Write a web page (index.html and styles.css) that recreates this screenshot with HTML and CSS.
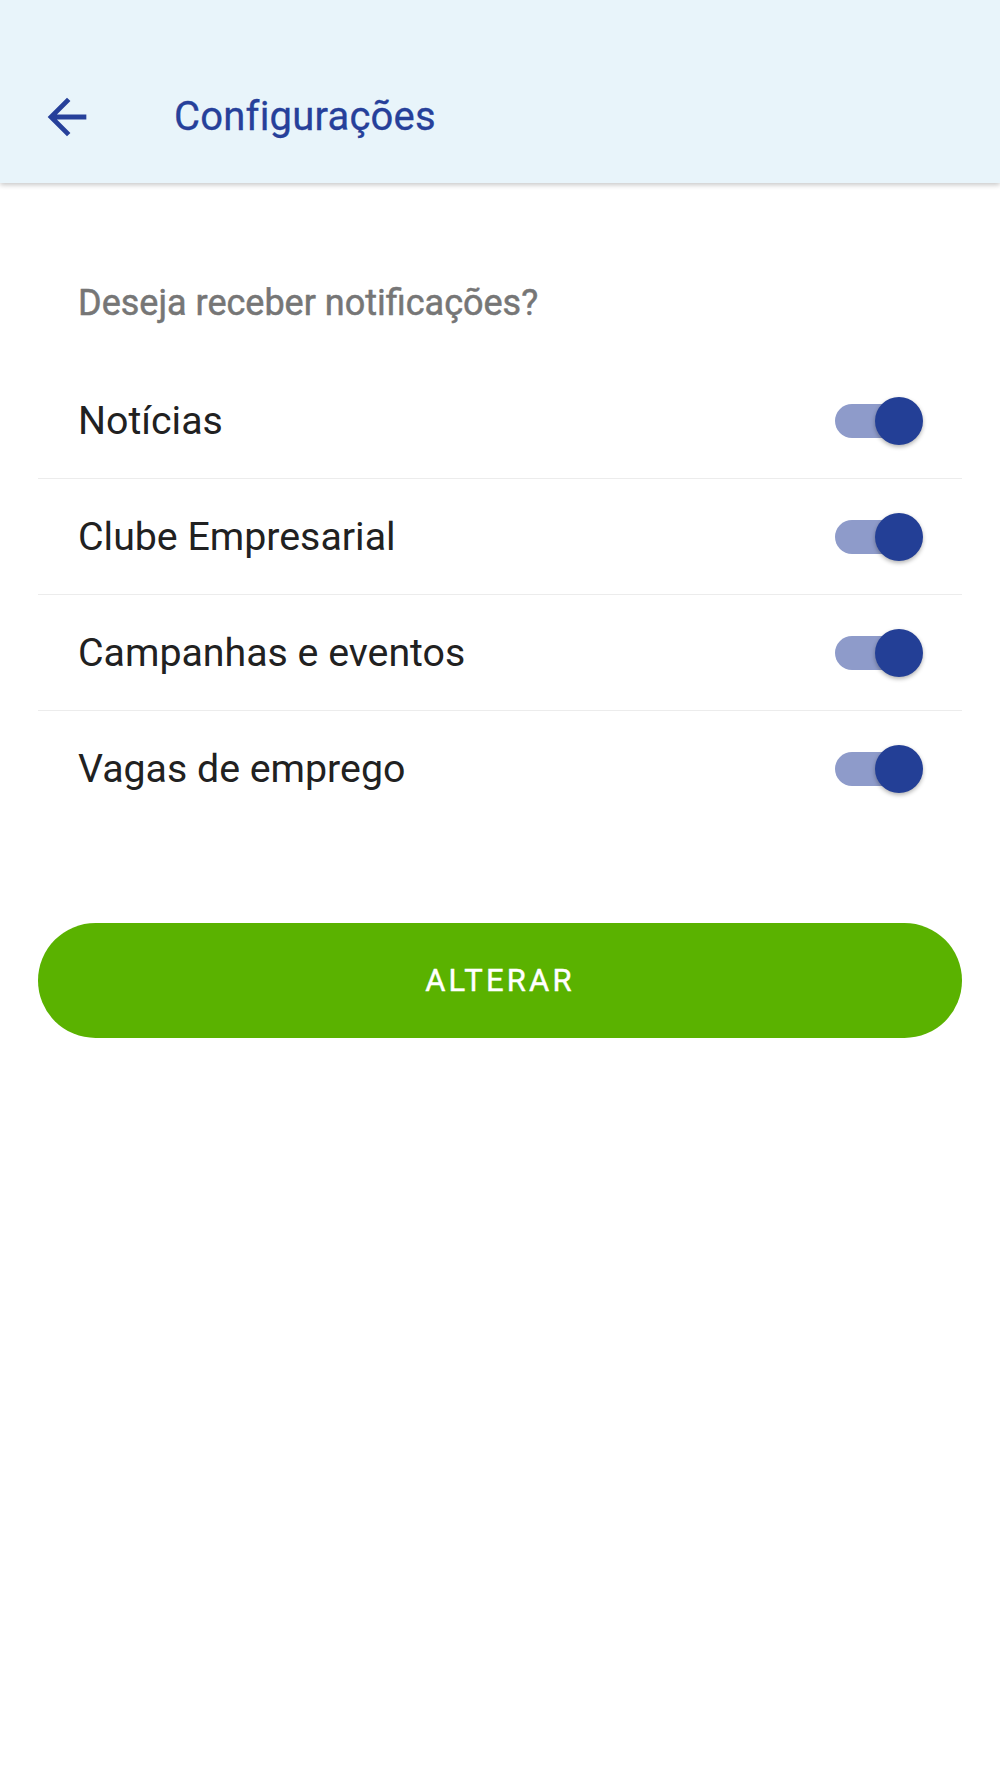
FILE: index.html
```html
<!DOCTYPE html>
<html lang="pt">
<head>
<meta charset="utf-8">
<title>Configurações</title>
<link rel="stylesheet" href="styles.css">
</head>
<body>
<header class="appbar">
  <button class="back" aria-label="Voltar">
    <svg viewBox="0 0 24 24" width="58" height="58"><path d="M20 11H7.83l5.59-5.59L12 4l-8 8 8 8 1.41-1.41L7.83 13H20v-2z" fill="#26409a"/></svg>
  </button>
  <h1 class="title">Configurações</h1>
</header>
<main class="content">
  <p class="question">Deseja receber notificações?</p>
  <ul class="list">
    <li class="row"><span class="label">Notícias</span><span class="switch"><span class="track"></span><span class="knob"></span></span></li>
    <li class="row"><span class="label">Clube Empresarial</span><span class="switch"><span class="track"></span><span class="knob"></span></span></li>
    <li class="row"><span class="label">Campanhas e eventos</span><span class="switch"><span class="track"></span><span class="knob"></span></span></li>
    <li class="row"><span class="label">Vagas de emprego</span><span class="switch"><span class="track"></span><span class="knob"></span></span></li>
  </ul>
  <button class="action">ALTERAR</button>
</main>
</body>
</html>
```
FILE: styles.css
```css
* { box-sizing: border-box; }
html, body { margin: 0; padding: 0; background: #ffffff; }
body { font-family: Roboto, "Noto Sans", "Liberation Sans", sans-serif; width: 1000px; min-height: 1778px; }

.appbar {
  height: 183px;
  padding: 50px 0 0 38px;
  background: #e8f4fa;
  display: flex;
  align-items: center;
  box-shadow: 0 2px 5px rgba(0,0,0,0.22);
  position: relative;
}
.back {
  width: 58px; height: 58px; padding: 0; border: 0; background: none;
  display: flex; align-items: center; justify-content: center;
}
.back svg { display: block; }
.title {
  margin: 0 0 0 78px;
  font-size: 40px;
  font-weight: 400;
  color: #26409a;
  letter-spacing: 0.2px;
  -webkit-text-stroke: 0.3px #26409a;
}

.content { padding: 0 38px; }
.question {
  margin: 0;
  padding: 100px 0 0 40px;
  height: 180px;
  font-size: 36px;
  line-height: 40px;
  font-weight: 400;
  color: #767676;
  -webkit-text-stroke: 0.5px #767676;
}
.list { list-style: none; margin: 0; padding: 0; }
.row {
  height: 116px;
  padding: 0 39px 0 40px;
  display: flex;
  align-items: center;
  justify-content: space-between;
  border-bottom: 1px solid #ececec;
}
.row:last-child { border-bottom: 0; height: 115px; }
.label { font-size: 39.3px; color: #212121; }

.switch { position: relative; width: 88px; height: 48px; display: flex; align-items: center; }
.track { width: 82px; height: 34px; border-radius: 17px; background: #8e9bca; }
.knob {
  position: absolute; right: 0; top: 0;
  width: 48px; height: 48px; border-radius: 50%;
  background: #233f96;
  box-shadow: 0 2px 4px rgba(0,0,0,0.3);
}

.action {
  display: block;
  width: 100%;
  height: 115px;
  margin-top: 97px;
  border: 0;
  border-radius: 58px;
  background: #5ab200;
  color: #ffffff;
  font-family: Roboto, "Noto Sans", "Liberation Sans", sans-serif;
  font-size: 31px;
  font-weight: 400;
  -webkit-text-stroke: 0.4px #ffffff;
  letter-spacing: 3.2px;
}
```
